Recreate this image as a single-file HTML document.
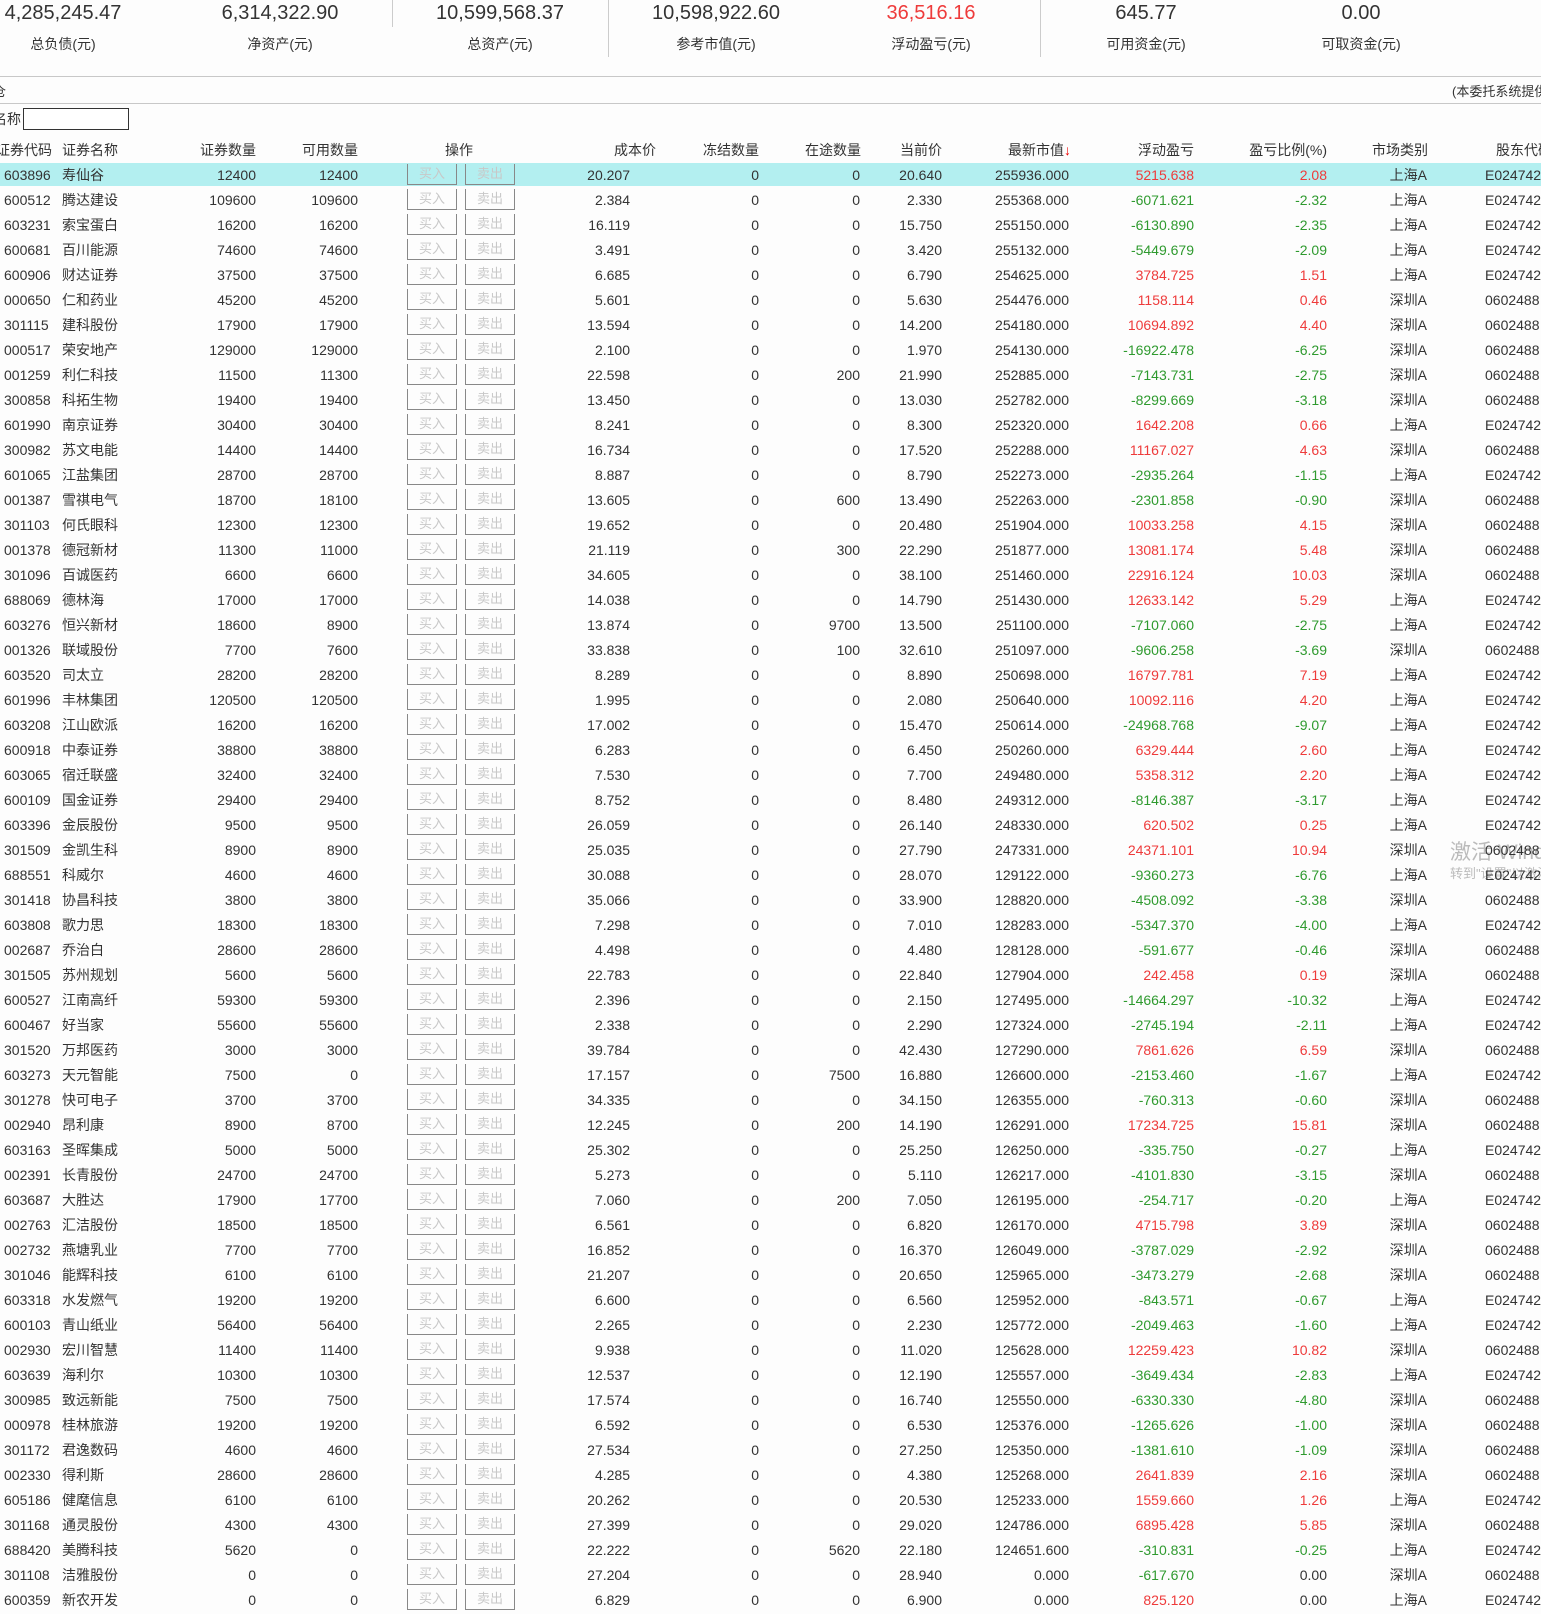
<!DOCTYPE html>
<html><head><meta charset="utf-8">
<style>
*{margin:0;padding:0;box-sizing:border-box}
body{width:1541px;height:1611px;overflow:hidden;background:#fdfdfd;font-family:"Liberation Sans","Noto Sans CJK SC",sans-serif;color:#333;position:relative;font-size:14px}
.a{position:absolute;white-space:nowrap}
.v{font-size:20px;top:2px;width:200px;text-align:center;color:#333}
.l{font-size:14px;top:34px;width:200px;text-align:center;color:#333}
.hl{position:absolute;left:0;top:163px;width:1541px;height:23px;background:#b3eff0}
table{position:absolute;left:0;top:164px;border-collapse:collapse;table-layout:fixed;width:1541px}
td{height:25px;line-height:23px;vertical-align:top;text-align:right;padding:0;white-space:nowrap;overflow:hidden;font-size:14px}
td.c{text-align:left;padding-left:4px}
td.n{text-align:left;padding-left:4px}
td.s{text-align:left;padding-left:58px}
td.b{text-align:left;padding-left:49px}
.bt{display:inline-block;width:50px;height:22px;border:1px solid #888;color:#c8c8c8;font-size:13px;text-align:center;line-height:20px;vertical-align:top;margin-right:8px;margin-top:-1px}
.r{color:#ee3b3b}.g{color:#2f9a2f}
.h{top:140px;font-size:14px}
</style></head><body>
<div class="a v" style="left:-37px">4,285,245.47</div>
<div class="a v" style="left:180px">6,314,322.90</div>
<div class="a v" style="left:400px">10,599,568.37</div>
<div class="a v" style="left:616px">10,598,922.60</div>
<div class="a v r" style="left:831px;color:#ee3b3b">36,516.16</div>
<div class="a v" style="left:1046px">645.77</div>
<div class="a v" style="left:1261px">0.00</div>
<div class="a l" style="left:-37px">总负债(元)</div>
<div class="a l" style="left:180px">净资产(元)</div>
<div class="a l" style="left:400px">总资产(元)</div>
<div class="a l" style="left:616px">参考市值(元)</div>
<div class="a l" style="left:831px">浮动盈亏(元)</div>
<div class="a l" style="left:1046px">可用资金(元)</div>
<div class="a l" style="left:1261px">可取资金(元)</div>
<div class="a" style="left:392px;top:0;width:1px;height:27px;background:#ccc"></div>
<div class="a" style="left:608px;top:0;width:1px;height:57px;background:#ccc"></div>
<div class="a" style="left:1040px;top:0;width:1px;height:57px;background:#ccc"></div>
<div class="a" style="left:0;top:76px;width:1541px;height:1px;background:#c8c8c8"></div>
<div class="a" style="left:0;top:103px;width:1541px;height:1px;background:#c8c8c8"></div>
<div class="a" style="left:-7px;top:81px;font-size:13px">仓</div>
<div class="a" style="left:1452px;top:81px;font-size:13px">(本委托系统提供</div>
<div class="a" style="left:-7px;top:109px;font-size:14px">名称</div>
<div class="a" style="left:23px;top:108px;width:106px;height:22px;border:1px solid #333;background:#fff"></div>
<div class="a h" style="right:1489px">证券代码</div>
<div class="a h" style="left:62px">证券名称</div>
<div class="a h" style="right:1285px">证券数量</div>
<div class="a h" style="right:1183px">可用数量</div>
<div class="a h" style="left:445px">操作</div>
<div class="a h" style="right:885px">成本价</div>
<div class="a h" style="right:782px">冻结数量</div>
<div class="a h" style="right:680px">在途数量</div>
<div class="a h" style="right:599px">当前价</div>
<div class="a h" style="right:470px">最新市值<span style="color:#e00">↓</span></div>
<div class="a h" style="right:347px">浮动盈亏</div>
<div class="a h" style="right:214px">盈亏比例(%)</div>
<div class="a h" style="right:113px">市场类别</div>
<div class="a h" style="left:1496px">股东代码</div>
<div class="hl"></div>
<div class="a" style="left:1450px;top:836px;font-size:21px;color:#bbb">激活 Windows</div>
<div class="a" style="left:1450px;top:863px;font-size:13px;color:#bbb">转到"设置"以激活</div>
<table>
<colgroup><col style="width:58px"><col style="width:122px"><col style="width:76px"><col style="width:102px"><col style="width:162px"><col style="width:110px"><col style="width:129px"><col style="width:101px"><col style="width:82px"><col style="width:127px"><col style="width:125px"><col style="width:133px"><col style="width:100px"><col style="width:114px"></colgroup>
<tr><td class="c">603896</td><td class="n">寿仙谷</td><td>12400</td><td>12400</td><td class="b"><span class="bt">买入</span><span class="bt">卖出</span></td><td>20.207</td><td>0</td><td>0</td><td>20.640</td><td>255936.000</td><td class="r">5215.638</td><td class="r">2.08</td><td>上海A</td><td class="s">E024742</td></tr>
<tr><td class="c">600512</td><td class="n">腾达建设</td><td>109600</td><td>109600</td><td class="b"><span class="bt">买入</span><span class="bt">卖出</span></td><td>2.384</td><td>0</td><td>0</td><td>2.330</td><td>255368.000</td><td class="g">-6071.621</td><td class="g">-2.32</td><td>上海A</td><td class="s">E024742</td></tr>
<tr><td class="c">603231</td><td class="n">索宝蛋白</td><td>16200</td><td>16200</td><td class="b"><span class="bt">买入</span><span class="bt">卖出</span></td><td>16.119</td><td>0</td><td>0</td><td>15.750</td><td>255150.000</td><td class="g">-6130.890</td><td class="g">-2.35</td><td>上海A</td><td class="s">E024742</td></tr>
<tr><td class="c">600681</td><td class="n">百川能源</td><td>74600</td><td>74600</td><td class="b"><span class="bt">买入</span><span class="bt">卖出</span></td><td>3.491</td><td>0</td><td>0</td><td>3.420</td><td>255132.000</td><td class="g">-5449.679</td><td class="g">-2.09</td><td>上海A</td><td class="s">E024742</td></tr>
<tr><td class="c">600906</td><td class="n">财达证券</td><td>37500</td><td>37500</td><td class="b"><span class="bt">买入</span><span class="bt">卖出</span></td><td>6.685</td><td>0</td><td>0</td><td>6.790</td><td>254625.000</td><td class="r">3784.725</td><td class="r">1.51</td><td>上海A</td><td class="s">E024742</td></tr>
<tr><td class="c">000650</td><td class="n">仁和药业</td><td>45200</td><td>45200</td><td class="b"><span class="bt">买入</span><span class="bt">卖出</span></td><td>5.601</td><td>0</td><td>0</td><td>5.630</td><td>254476.000</td><td class="r">1158.114</td><td class="r">0.46</td><td>深圳A</td><td class="s">0602488</td></tr>
<tr><td class="c">301115</td><td class="n">建科股份</td><td>17900</td><td>17900</td><td class="b"><span class="bt">买入</span><span class="bt">卖出</span></td><td>13.594</td><td>0</td><td>0</td><td>14.200</td><td>254180.000</td><td class="r">10694.892</td><td class="r">4.40</td><td>深圳A</td><td class="s">0602488</td></tr>
<tr><td class="c">000517</td><td class="n">荣安地产</td><td>129000</td><td>129000</td><td class="b"><span class="bt">买入</span><span class="bt">卖出</span></td><td>2.100</td><td>0</td><td>0</td><td>1.970</td><td>254130.000</td><td class="g">-16922.478</td><td class="g">-6.25</td><td>深圳A</td><td class="s">0602488</td></tr>
<tr><td class="c">001259</td><td class="n">利仁科技</td><td>11500</td><td>11300</td><td class="b"><span class="bt">买入</span><span class="bt">卖出</span></td><td>22.598</td><td>0</td><td>200</td><td>21.990</td><td>252885.000</td><td class="g">-7143.731</td><td class="g">-2.75</td><td>深圳A</td><td class="s">0602488</td></tr>
<tr><td class="c">300858</td><td class="n">科拓生物</td><td>19400</td><td>19400</td><td class="b"><span class="bt">买入</span><span class="bt">卖出</span></td><td>13.450</td><td>0</td><td>0</td><td>13.030</td><td>252782.000</td><td class="g">-8299.669</td><td class="g">-3.18</td><td>深圳A</td><td class="s">0602488</td></tr>
<tr><td class="c">601990</td><td class="n">南京证券</td><td>30400</td><td>30400</td><td class="b"><span class="bt">买入</span><span class="bt">卖出</span></td><td>8.241</td><td>0</td><td>0</td><td>8.300</td><td>252320.000</td><td class="r">1642.208</td><td class="r">0.66</td><td>上海A</td><td class="s">E024742</td></tr>
<tr><td class="c">300982</td><td class="n">苏文电能</td><td>14400</td><td>14400</td><td class="b"><span class="bt">买入</span><span class="bt">卖出</span></td><td>16.734</td><td>0</td><td>0</td><td>17.520</td><td>252288.000</td><td class="r">11167.027</td><td class="r">4.63</td><td>深圳A</td><td class="s">0602488</td></tr>
<tr><td class="c">601065</td><td class="n">江盐集团</td><td>28700</td><td>28700</td><td class="b"><span class="bt">买入</span><span class="bt">卖出</span></td><td>8.887</td><td>0</td><td>0</td><td>8.790</td><td>252273.000</td><td class="g">-2935.264</td><td class="g">-1.15</td><td>上海A</td><td class="s">E024742</td></tr>
<tr><td class="c">001387</td><td class="n">雪祺电气</td><td>18700</td><td>18100</td><td class="b"><span class="bt">买入</span><span class="bt">卖出</span></td><td>13.605</td><td>0</td><td>600</td><td>13.490</td><td>252263.000</td><td class="g">-2301.858</td><td class="g">-0.90</td><td>深圳A</td><td class="s">0602488</td></tr>
<tr><td class="c">301103</td><td class="n">何氏眼科</td><td>12300</td><td>12300</td><td class="b"><span class="bt">买入</span><span class="bt">卖出</span></td><td>19.652</td><td>0</td><td>0</td><td>20.480</td><td>251904.000</td><td class="r">10033.258</td><td class="r">4.15</td><td>深圳A</td><td class="s">0602488</td></tr>
<tr><td class="c">001378</td><td class="n">德冠新材</td><td>11300</td><td>11000</td><td class="b"><span class="bt">买入</span><span class="bt">卖出</span></td><td>21.119</td><td>0</td><td>300</td><td>22.290</td><td>251877.000</td><td class="r">13081.174</td><td class="r">5.48</td><td>深圳A</td><td class="s">0602488</td></tr>
<tr><td class="c">301096</td><td class="n">百诚医药</td><td>6600</td><td>6600</td><td class="b"><span class="bt">买入</span><span class="bt">卖出</span></td><td>34.605</td><td>0</td><td>0</td><td>38.100</td><td>251460.000</td><td class="r">22916.124</td><td class="r">10.03</td><td>深圳A</td><td class="s">0602488</td></tr>
<tr><td class="c">688069</td><td class="n">德林海</td><td>17000</td><td>17000</td><td class="b"><span class="bt">买入</span><span class="bt">卖出</span></td><td>14.038</td><td>0</td><td>0</td><td>14.790</td><td>251430.000</td><td class="r">12633.142</td><td class="r">5.29</td><td>上海A</td><td class="s">E024742</td></tr>
<tr><td class="c">603276</td><td class="n">恒兴新材</td><td>18600</td><td>8900</td><td class="b"><span class="bt">买入</span><span class="bt">卖出</span></td><td>13.874</td><td>0</td><td>9700</td><td>13.500</td><td>251100.000</td><td class="g">-7107.060</td><td class="g">-2.75</td><td>上海A</td><td class="s">E024742</td></tr>
<tr><td class="c">001326</td><td class="n">联域股份</td><td>7700</td><td>7600</td><td class="b"><span class="bt">买入</span><span class="bt">卖出</span></td><td>33.838</td><td>0</td><td>100</td><td>32.610</td><td>251097.000</td><td class="g">-9606.258</td><td class="g">-3.69</td><td>深圳A</td><td class="s">0602488</td></tr>
<tr><td class="c">603520</td><td class="n">司太立</td><td>28200</td><td>28200</td><td class="b"><span class="bt">买入</span><span class="bt">卖出</span></td><td>8.289</td><td>0</td><td>0</td><td>8.890</td><td>250698.000</td><td class="r">16797.781</td><td class="r">7.19</td><td>上海A</td><td class="s">E024742</td></tr>
<tr><td class="c">601996</td><td class="n">丰林集团</td><td>120500</td><td>120500</td><td class="b"><span class="bt">买入</span><span class="bt">卖出</span></td><td>1.995</td><td>0</td><td>0</td><td>2.080</td><td>250640.000</td><td class="r">10092.116</td><td class="r">4.20</td><td>上海A</td><td class="s">E024742</td></tr>
<tr><td class="c">603208</td><td class="n">江山欧派</td><td>16200</td><td>16200</td><td class="b"><span class="bt">买入</span><span class="bt">卖出</span></td><td>17.002</td><td>0</td><td>0</td><td>15.470</td><td>250614.000</td><td class="g">-24968.768</td><td class="g">-9.07</td><td>上海A</td><td class="s">E024742</td></tr>
<tr><td class="c">600918</td><td class="n">中泰证券</td><td>38800</td><td>38800</td><td class="b"><span class="bt">买入</span><span class="bt">卖出</span></td><td>6.283</td><td>0</td><td>0</td><td>6.450</td><td>250260.000</td><td class="r">6329.444</td><td class="r">2.60</td><td>上海A</td><td class="s">E024742</td></tr>
<tr><td class="c">603065</td><td class="n">宿迁联盛</td><td>32400</td><td>32400</td><td class="b"><span class="bt">买入</span><span class="bt">卖出</span></td><td>7.530</td><td>0</td><td>0</td><td>7.700</td><td>249480.000</td><td class="r">5358.312</td><td class="r">2.20</td><td>上海A</td><td class="s">E024742</td></tr>
<tr><td class="c">600109</td><td class="n">国金证券</td><td>29400</td><td>29400</td><td class="b"><span class="bt">买入</span><span class="bt">卖出</span></td><td>8.752</td><td>0</td><td>0</td><td>8.480</td><td>249312.000</td><td class="g">-8146.387</td><td class="g">-3.17</td><td>上海A</td><td class="s">E024742</td></tr>
<tr><td class="c">603396</td><td class="n">金辰股份</td><td>9500</td><td>9500</td><td class="b"><span class="bt">买入</span><span class="bt">卖出</span></td><td>26.059</td><td>0</td><td>0</td><td>26.140</td><td>248330.000</td><td class="r">620.502</td><td class="r">0.25</td><td>上海A</td><td class="s">E024742</td></tr>
<tr><td class="c">301509</td><td class="n">金凯生科</td><td>8900</td><td>8900</td><td class="b"><span class="bt">买入</span><span class="bt">卖出</span></td><td>25.035</td><td>0</td><td>0</td><td>27.790</td><td>247331.000</td><td class="r">24371.101</td><td class="r">10.94</td><td>深圳A</td><td class="s">0602488</td></tr>
<tr><td class="c">688551</td><td class="n">科威尔</td><td>4600</td><td>4600</td><td class="b"><span class="bt">买入</span><span class="bt">卖出</span></td><td>30.088</td><td>0</td><td>0</td><td>28.070</td><td>129122.000</td><td class="g">-9360.273</td><td class="g">-6.76</td><td>上海A</td><td class="s">E024742</td></tr>
<tr><td class="c">301418</td><td class="n">协昌科技</td><td>3800</td><td>3800</td><td class="b"><span class="bt">买入</span><span class="bt">卖出</span></td><td>35.066</td><td>0</td><td>0</td><td>33.900</td><td>128820.000</td><td class="g">-4508.092</td><td class="g">-3.38</td><td>深圳A</td><td class="s">0602488</td></tr>
<tr><td class="c">603808</td><td class="n">歌力思</td><td>18300</td><td>18300</td><td class="b"><span class="bt">买入</span><span class="bt">卖出</span></td><td>7.298</td><td>0</td><td>0</td><td>7.010</td><td>128283.000</td><td class="g">-5347.370</td><td class="g">-4.00</td><td>上海A</td><td class="s">E024742</td></tr>
<tr><td class="c">002687</td><td class="n">乔治白</td><td>28600</td><td>28600</td><td class="b"><span class="bt">买入</span><span class="bt">卖出</span></td><td>4.498</td><td>0</td><td>0</td><td>4.480</td><td>128128.000</td><td class="g">-591.677</td><td class="g">-0.46</td><td>深圳A</td><td class="s">0602488</td></tr>
<tr><td class="c">301505</td><td class="n">苏州规划</td><td>5600</td><td>5600</td><td class="b"><span class="bt">买入</span><span class="bt">卖出</span></td><td>22.783</td><td>0</td><td>0</td><td>22.840</td><td>127904.000</td><td class="r">242.458</td><td class="r">0.19</td><td>深圳A</td><td class="s">0602488</td></tr>
<tr><td class="c">600527</td><td class="n">江南高纤</td><td>59300</td><td>59300</td><td class="b"><span class="bt">买入</span><span class="bt">卖出</span></td><td>2.396</td><td>0</td><td>0</td><td>2.150</td><td>127495.000</td><td class="g">-14664.297</td><td class="g">-10.32</td><td>上海A</td><td class="s">E024742</td></tr>
<tr><td class="c">600467</td><td class="n">好当家</td><td>55600</td><td>55600</td><td class="b"><span class="bt">买入</span><span class="bt">卖出</span></td><td>2.338</td><td>0</td><td>0</td><td>2.290</td><td>127324.000</td><td class="g">-2745.194</td><td class="g">-2.11</td><td>上海A</td><td class="s">E024742</td></tr>
<tr><td class="c">301520</td><td class="n">万邦医药</td><td>3000</td><td>3000</td><td class="b"><span class="bt">买入</span><span class="bt">卖出</span></td><td>39.784</td><td>0</td><td>0</td><td>42.430</td><td>127290.000</td><td class="r">7861.626</td><td class="r">6.59</td><td>深圳A</td><td class="s">0602488</td></tr>
<tr><td class="c">603273</td><td class="n">天元智能</td><td>7500</td><td>0</td><td class="b"><span class="bt">买入</span><span class="bt">卖出</span></td><td>17.157</td><td>0</td><td>7500</td><td>16.880</td><td>126600.000</td><td class="g">-2153.460</td><td class="g">-1.67</td><td>上海A</td><td class="s">E024742</td></tr>
<tr><td class="c">301278</td><td class="n">快可电子</td><td>3700</td><td>3700</td><td class="b"><span class="bt">买入</span><span class="bt">卖出</span></td><td>34.335</td><td>0</td><td>0</td><td>34.150</td><td>126355.000</td><td class="g">-760.313</td><td class="g">-0.60</td><td>深圳A</td><td class="s">0602488</td></tr>
<tr><td class="c">002940</td><td class="n">昂利康</td><td>8900</td><td>8700</td><td class="b"><span class="bt">买入</span><span class="bt">卖出</span></td><td>12.245</td><td>0</td><td>200</td><td>14.190</td><td>126291.000</td><td class="r">17234.725</td><td class="r">15.81</td><td>深圳A</td><td class="s">0602488</td></tr>
<tr><td class="c">603163</td><td class="n">圣晖集成</td><td>5000</td><td>5000</td><td class="b"><span class="bt">买入</span><span class="bt">卖出</span></td><td>25.302</td><td>0</td><td>0</td><td>25.250</td><td>126250.000</td><td class="g">-335.750</td><td class="g">-0.27</td><td>上海A</td><td class="s">E024742</td></tr>
<tr><td class="c">002391</td><td class="n">长青股份</td><td>24700</td><td>24700</td><td class="b"><span class="bt">买入</span><span class="bt">卖出</span></td><td>5.273</td><td>0</td><td>0</td><td>5.110</td><td>126217.000</td><td class="g">-4101.830</td><td class="g">-3.15</td><td>深圳A</td><td class="s">0602488</td></tr>
<tr><td class="c">603687</td><td class="n">大胜达</td><td>17900</td><td>17700</td><td class="b"><span class="bt">买入</span><span class="bt">卖出</span></td><td>7.060</td><td>0</td><td>200</td><td>7.050</td><td>126195.000</td><td class="g">-254.717</td><td class="g">-0.20</td><td>上海A</td><td class="s">E024742</td></tr>
<tr><td class="c">002763</td><td class="n">汇洁股份</td><td>18500</td><td>18500</td><td class="b"><span class="bt">买入</span><span class="bt">卖出</span></td><td>6.561</td><td>0</td><td>0</td><td>6.820</td><td>126170.000</td><td class="r">4715.798</td><td class="r">3.89</td><td>深圳A</td><td class="s">0602488</td></tr>
<tr><td class="c">002732</td><td class="n">燕塘乳业</td><td>7700</td><td>7700</td><td class="b"><span class="bt">买入</span><span class="bt">卖出</span></td><td>16.852</td><td>0</td><td>0</td><td>16.370</td><td>126049.000</td><td class="g">-3787.029</td><td class="g">-2.92</td><td>深圳A</td><td class="s">0602488</td></tr>
<tr><td class="c">301046</td><td class="n">能辉科技</td><td>6100</td><td>6100</td><td class="b"><span class="bt">买入</span><span class="bt">卖出</span></td><td>21.207</td><td>0</td><td>0</td><td>20.650</td><td>125965.000</td><td class="g">-3473.279</td><td class="g">-2.68</td><td>深圳A</td><td class="s">0602488</td></tr>
<tr><td class="c">603318</td><td class="n">水发燃气</td><td>19200</td><td>19200</td><td class="b"><span class="bt">买入</span><span class="bt">卖出</span></td><td>6.600</td><td>0</td><td>0</td><td>6.560</td><td>125952.000</td><td class="g">-843.571</td><td class="g">-0.67</td><td>上海A</td><td class="s">E024742</td></tr>
<tr><td class="c">600103</td><td class="n">青山纸业</td><td>56400</td><td>56400</td><td class="b"><span class="bt">买入</span><span class="bt">卖出</span></td><td>2.265</td><td>0</td><td>0</td><td>2.230</td><td>125772.000</td><td class="g">-2049.463</td><td class="g">-1.60</td><td>上海A</td><td class="s">E024742</td></tr>
<tr><td class="c">002930</td><td class="n">宏川智慧</td><td>11400</td><td>11400</td><td class="b"><span class="bt">买入</span><span class="bt">卖出</span></td><td>9.938</td><td>0</td><td>0</td><td>11.020</td><td>125628.000</td><td class="r">12259.423</td><td class="r">10.82</td><td>深圳A</td><td class="s">0602488</td></tr>
<tr><td class="c">603639</td><td class="n">海利尔</td><td>10300</td><td>10300</td><td class="b"><span class="bt">买入</span><span class="bt">卖出</span></td><td>12.537</td><td>0</td><td>0</td><td>12.190</td><td>125557.000</td><td class="g">-3649.434</td><td class="g">-2.83</td><td>上海A</td><td class="s">E024742</td></tr>
<tr><td class="c">300985</td><td class="n">致远新能</td><td>7500</td><td>7500</td><td class="b"><span class="bt">买入</span><span class="bt">卖出</span></td><td>17.574</td><td>0</td><td>0</td><td>16.740</td><td>125550.000</td><td class="g">-6330.330</td><td class="g">-4.80</td><td>深圳A</td><td class="s">0602488</td></tr>
<tr><td class="c">000978</td><td class="n">桂林旅游</td><td>19200</td><td>19200</td><td class="b"><span class="bt">买入</span><span class="bt">卖出</span></td><td>6.592</td><td>0</td><td>0</td><td>6.530</td><td>125376.000</td><td class="g">-1265.626</td><td class="g">-1.00</td><td>深圳A</td><td class="s">0602488</td></tr>
<tr><td class="c">301172</td><td class="n">君逸数码</td><td>4600</td><td>4600</td><td class="b"><span class="bt">买入</span><span class="bt">卖出</span></td><td>27.534</td><td>0</td><td>0</td><td>27.250</td><td>125350.000</td><td class="g">-1381.610</td><td class="g">-1.09</td><td>深圳A</td><td class="s">0602488</td></tr>
<tr><td class="c">002330</td><td class="n">得利斯</td><td>28600</td><td>28600</td><td class="b"><span class="bt">买入</span><span class="bt">卖出</span></td><td>4.285</td><td>0</td><td>0</td><td>4.380</td><td>125268.000</td><td class="r">2641.839</td><td class="r">2.16</td><td>深圳A</td><td class="s">0602488</td></tr>
<tr><td class="c">605186</td><td class="n">健麾信息</td><td>6100</td><td>6100</td><td class="b"><span class="bt">买入</span><span class="bt">卖出</span></td><td>20.262</td><td>0</td><td>0</td><td>20.530</td><td>125233.000</td><td class="r">1559.660</td><td class="r">1.26</td><td>上海A</td><td class="s">E024742</td></tr>
<tr><td class="c">301168</td><td class="n">通灵股份</td><td>4300</td><td>4300</td><td class="b"><span class="bt">买入</span><span class="bt">卖出</span></td><td>27.399</td><td>0</td><td>0</td><td>29.020</td><td>124786.000</td><td class="r">6895.428</td><td class="r">5.85</td><td>深圳A</td><td class="s">0602488</td></tr>
<tr><td class="c">688420</td><td class="n">美腾科技</td><td>5620</td><td>0</td><td class="b"><span class="bt">买入</span><span class="bt">卖出</span></td><td>22.222</td><td>0</td><td>5620</td><td>22.180</td><td>124651.600</td><td class="g">-310.831</td><td class="g">-0.25</td><td>上海A</td><td class="s">E024742</td></tr>
<tr><td class="c">301108</td><td class="n">洁雅股份</td><td>0</td><td>0</td><td class="b"><span class="bt">买入</span><span class="bt">卖出</span></td><td>27.204</td><td>0</td><td>0</td><td>28.940</td><td>0.000</td><td class="g">-617.670</td><td>0.00</td><td>深圳A</td><td class="s">0602488</td></tr>
<tr><td class="c">600359</td><td class="n">新农开发</td><td>0</td><td>0</td><td class="b"><span class="bt">买入</span><span class="bt">卖出</span></td><td>6.829</td><td>0</td><td>0</td><td>6.900</td><td>0.000</td><td class="r">825.120</td><td>0.00</td><td>上海A</td><td class="s">E024742</td></tr>
</table>
</body></html>
